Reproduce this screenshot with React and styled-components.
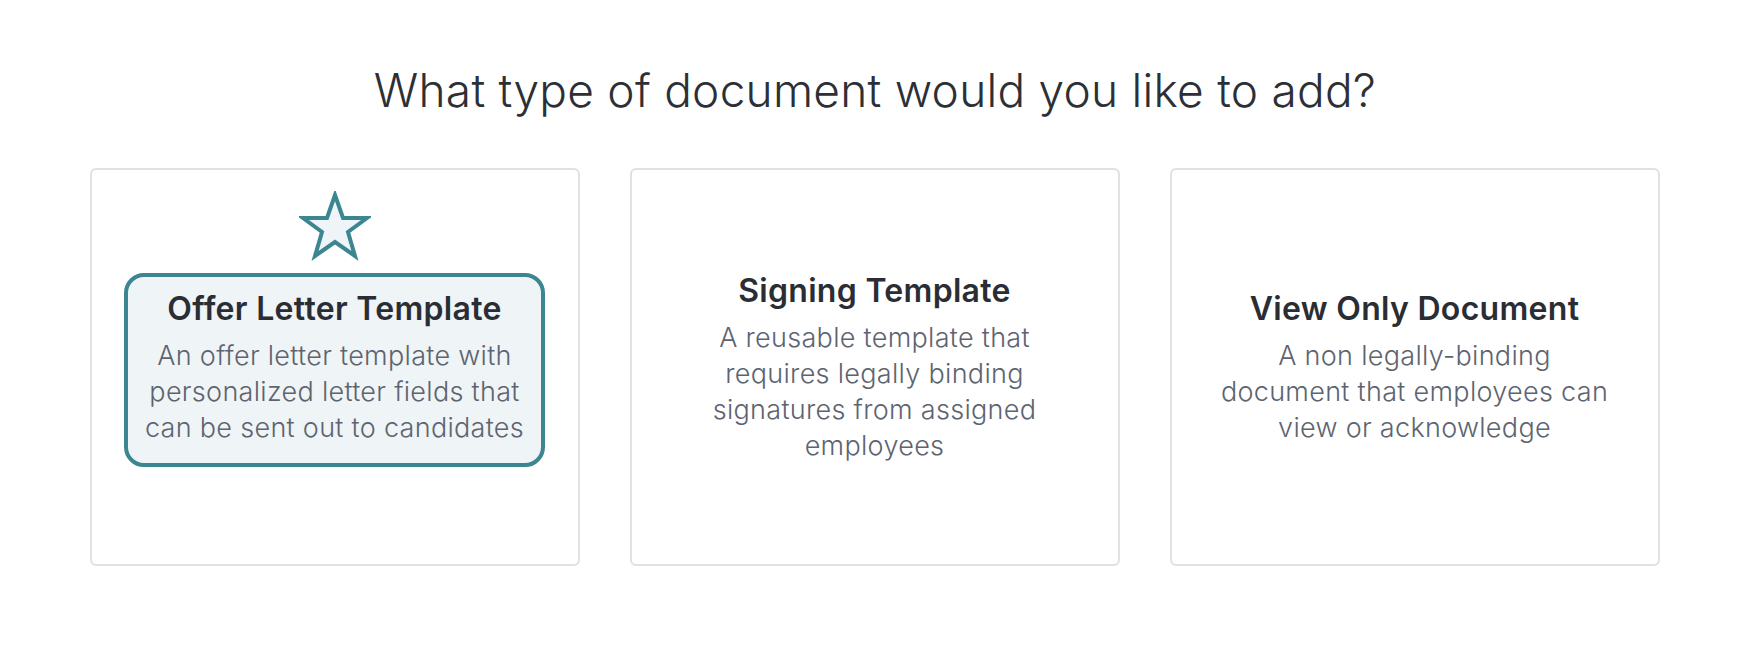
import React from 'react';
import styled, { createGlobalStyle } from 'styled-components';

const GlobalStyle = createGlobalStyle`
    body {
        margin: 0;
        background: #ffffff;
        font-family: 'Inter', 'Liberation Sans', sans-serif;
    }
`;

const Page = styled.div`
    width: 1750px;
    padding-top: 63px;
    display: flex;
    flex-direction: column;
    align-items: center;
`;

const Heading = styled.h1`
    margin: 0;
    font-size: 46px;
    line-height: 54px;
    font-weight: 300;
    color: #2c3036;
    letter-spacing: 0.25px;
`;

const CardRow = styled.div`
    margin-top: 51px;
    display: grid;
    grid-template-columns: repeat(3, 490px);
    gap: 50px;
`;

const Card = styled.div`
    height: 398px;
    box-sizing: border-box;
    border: 2px solid #e1e1e1;
    border-radius: 6px;
    background: #fff;
    display: flex;
    align-items: center;
    justify-content: center;
    padding: 6px 33px 0 32px;
`;

const Option = styled.div`
    position: relative;
    width: 100%;
    box-sizing: border-box;
    padding: 13px 9px 17px;
    border: 4px solid ${(p) => (p.selected ? '#3c8691' : 'transparent')};
    border-radius: 20px;
    background: ${(p) => (p.selected ? '#eff4f7' : 'transparent')};
    text-align: center;
`;

const StarBadge = styled.svg`
    position: absolute;
    left: 50%;
    bottom: calc(100% + 16px);
    transform: translateX(-50%);
`;

const Title = styled.div`
    font-size: 32px;
    line-height: 38px;
    font-weight: 600;
    color: #2a2e34;
    letter-spacing: 0.3px;
    margin-bottom: 10px;
`;

const Description = styled.div`
    font-size: 27px;
    line-height: 36px;
    font-weight: 300;
    color: #5d6470;
    letter-spacing: 0.3px;
`;

const options = [
    {
        title: 'Offer Letter Template',
        text: 'An offer letter template with personalized letter fields that can be sent out to candidates',
        selected: true,
    },
    {
        title: 'Signing Template',
        text: 'A reusable template that requires legally binding signatures from assigned employees',
    },
    {
        title: 'View Only Document',
        text: 'A non legally-binding document that employees can view or acknowledge',
    },
];

function Star() {
    return (
        <StarBadge width="72" height="70" viewBox="0 0 72 70">
            <polygon
                points="36,4 44,27 68,27 49,41 56,65 36,51 16,65 23,41 4,27 28,27"
                fill="#eef4f7"
                stroke="#3c8691"
                strokeWidth="4"
                strokeLinejoin="miter"
            />
        </StarBadge>
    );
}

export default function App() {
    return (
        <>
            <GlobalStyle />
            <Page>
                <Heading>What type of document would you like to add?</Heading>
                <CardRow>
                    {options.map((o) => (
                        <Card key={o.title}>
                            <Option selected={o.selected}>
                                {o.selected && <Star />}
                                <Title>{o.title}</Title>
                                <Description>{o.text}</Description>
                            </Option>
                        </Card>
                    ))}
                </CardRow>
            </Page>
        </>
    );
}
